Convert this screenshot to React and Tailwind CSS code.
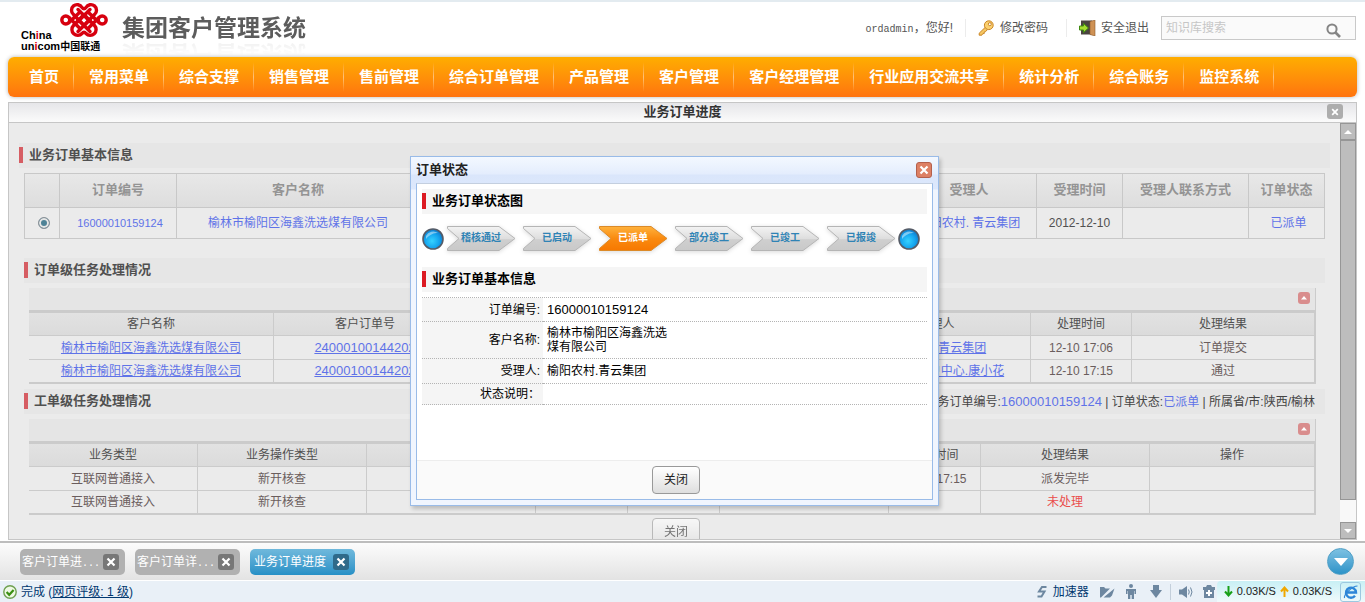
import React from "react";
import { useState } from "react";

const menus = [
  "首页",
  "常用菜单",
  "综合支撑",
  "销售管理",
  "售前管理",
  "综合订单管理",
  "产品管理",
  "客户管理",
  "客户经理管理",
  "行业应用交流共享",
  "统计分析",
  "综合账务",
  "监控系统",
];

const steps = ["稽核通过", "已启动", "已派单", "部分竣工", "已竣工", "已报竣"];

const tabs = [
  { id: 1, name: "客户订单进", more: true },
  { id: 2, name: "客户订单详", more: true },
  { id: 3, name: "业务订单进度", more: false },
];

const taskRows = [
  {
    no: "24000100144202",
    handler: "榆阳农村.青云集团",
    time: "12-10 17:06",
    result: "订单提交",
  },
  {
    no: "24000100144202",
    handler: "榆林联通客户中心.康小花",
    time: "12-10 17:15",
    result: "通过",
  },
];

function Logo() {
  return (
    <div className="relative w-[90px] h-[50px]">
      <svg
        viewBox="0 0 48 38"
        className="absolute right-[2px] top-0 w-[48px] h-[38px]"
        fill="none"
        stroke="#d7000f"
        strokeWidth="3.4"
        strokeLinecap="round"
        strokeLinejoin="round"
      >
        <circle cx="5.8" cy="18" r="4" />
        <circle cx="42.2" cy="18" r="4" />
        <path d="M9 15.5L19.5 26M39 15.5L28.5 26M9 20.5L20 10M39 20.5L28 10" />
        <path d="M24 23.5L13.5 12.5A5.6 5.6 0 1 1 22 5.5Q24 8 26 5.5A5.6 5.6 0 1 1 34.5 12.5L24 23.5" />
        <path d="M24 12.5L13.5 23.5A5.6 5.6 0 1 0 22 31.5Q24 29 26 31.5A5.6 5.6 0 1 0 34.5 23.5L24 12.5" />
        <path d="M18 7.5L30 19.5M30 7.5L18 19.5M18 17.5L30 29.5M30 17.5L18 29.5" />
      </svg>
      <div className="absolute left-px top-[28px] text-[11px] leading-[11px] font-bold text-black whitespace-nowrap">
        <p>
          Ch<span className="text-[#d7000f]">i</span>na
        </p>
        <p>
          un<span className="text-[#d7000f]">i</span>com
          <span className="text-[10px]">中国联通</span>
        </p>
      </div>
    </div>
  );
}

function KeyIcon() {
  return (
    <svg viewBox="0 0 16 16" className="w-4 h-4">
      <path
        d="M7.4 7.2L1.2 13.2v2h2.6l1-1.6h1.4v-1.6l1.3-.3 1.8-1.9"
        fill="#f6c761"
        stroke="#c98425"
      />
      <circle cx="10.8" cy="5.2" r="4.4" fill="#fbd06e" stroke="#c98425" />
      <circle cx="11.8" cy="4.2" r="1.5" fill="#fff" stroke="#c98425" />
    </svg>
  );
}

function DoorIcon() {
  return (
    <svg viewBox="0 0 17 16" className="w-[17px] h-4">
      <rect x="2" y="0.5" width="11" height="14" fill="#4a4440" />
      <path d="M11 1.5L16 0v16l-5-1.5z" fill="#cf9255" stroke="#8d5a2b" strokeWidth=".6" />
      <path
        d="M0.5 6h4V3.4L9.5 8l-5 4.6V10h-4z"
        fill="#a5dd2f"
        stroke="#3f8a10"
      />
    </svg>
  );
}

function SmallX({ size }) {
  return (
    <svg viewBox="0 0 10 10" className={size}>
      <path d="M1.5 1.5l7 7M8.5 1.5l-7 7" stroke="#fff" strokeWidth="2.2" />
    </svg>
  );
}

function Ball() {
  return (
    <svg viewBox="0 0 22 22" className="w-[22px] h-[22px] shrink-0">
      <defs>
        <radialGradient id="ball" cx="45%" cy="60%" r="60%">
          <stop offset="0" stopColor="#35d2ff" />
          <stop offset=".6" stopColor="#14a4ee" />
          <stop offset="1" stopColor="#0f78c8" />
        </radialGradient>
      </defs>
      <circle cx="11" cy="11" r="10" fill="url(#ball)" stroke="#555b66" strokeWidth="1.6" />
      <path d="M4 8a8 8 0 0 1 12-3c-4 0-8 1-12 6z" fill="#fff" opacity=".45" />
    </svg>
  );
}

function Step({ name, active }) {
  return (
    <li className="relative w-[70px] h-[27px] shrink-0">
      <svg viewBox="0 0 70 27" className="absolute inset-0 w-full h-full drop-shadow-sm">
        <defs>
          <linearGradient id="stepOff" x1="0" y1="0" x2="0" y2="1">
            <stop offset="0" stopColor="#f3f3f3" />
            <stop offset=".5" stopColor="#dedede" />
            <stop offset=".55" stopColor="#cfcfcf" />
            <stop offset="1" stopColor="#c9c9c9" />
          </linearGradient>
          <linearGradient id="stepOn" x1="0" y1="0" x2="0" y2="1">
            <stop offset="0" stopColor="#ffb23c" />
            <stop offset=".5" stopColor="#f98a10" />
            <stop offset="1" stopColor="#f77800" />
          </linearGradient>
        </defs>
        <path
          d="M1.5 1.5H53L69 13.5L53 25.5H1.5V23.5L13 13.5L1.5 3.5z"
          fill={active ? "url(#stepOn)" : "url(#stepOff)"}
          stroke={active ? "#dc8a28" : "#b5b5b5"}
          strokeLinejoin="round"
        />
      </svg>
      <span
        className={
          active
            ? "relative block text-center text-[10px] leading-[25px] font-bold text-white"
            : "relative block text-center text-[10px] leading-[25px] font-bold text-[#2f83b5]"
        }
      >
        {name}
      </span>
    </li>
  );
}

function SectionTitle({ title, children }) {
  return (
    <div className="flex items-center justify-between h-[25px] bg-[#e6e6e6] pr-[10px] pb-[2px]">
      <h2 className="flex items-center text-[13px] font-bold text-[#505050]">
        <span className="w-1 h-4 bg-[#d65d63] mr-[6px]"></span>
        {title}
      </h2>
      {children}
    </div>
  );
}

function DialogTitle({ title }) {
  return (
    <h3 className="flex items-center h-[25px] pb-[2px] bg-[#f5f5f5] text-[13px] font-bold text-black">
      <span className="w-1 h-4 bg-[#dc1a22] mr-[6px]"></span>
      {title}
    </h3>
  );
}

function Toolbar() {
  return (
    <div className="flex items-center justify-end h-[22px] mt-[5px] pr-[5px] pb-[2px] bg-[#e5e5e5] border-r border-[#cbcbcb]">
      <button aria-label="收起" className="flex items-center justify-center w-3 h-3 rounded-[3px] bg-[#d98d8d]">
        <svg viewBox="0 0 8 8" className="w-2 h-2">
          <path d="M4 2l3 3.5H1z" fill="#fff" />
        </svg>
      </button>
    </div>
  );
}

function Th({ children }) {
  return (
    <th className="h-[23px] p-0 font-normal text-[#505050] bg-linear-to-b from-[#e2e2e2] to-[#dbdbdb] border-r border-b border-[#cbcbcb] last:border-r-2">
      {children}
    </th>
  );
}

function Td({ children }) {
  return (
    <td className="h-[24px] p-0 text-center border-r border-b border-[#cbcbcb] last:border-r-2 group-last:border-b-2">
      {children}
    </td>
  );
}

function BasicTable() {
  const th =
    "h-[34px] p-0 pb-[2px] border border-[#c8c8c8] text-[13px] font-bold text-[#949494]";
  const td = "h-[31px] p-0 border border-[#c8c8c8] text-center";
  return (
    <table className="w-full table-fixed border-collapse text-[12px] text-[#505050]">
      <colgroup>
        <col className="w-[35px]" />
        <col className="w-[117px]" />
        <col className="w-[243px]" />
        <col />
        <col className="w-[135px]" />
        <col className="w-[86px]" />
        <col className="w-[126px]" />
        <col className="w-[76px]" />
      </colgroup>
      <thead>
        <tr className="bg-linear-to-b from-[#e8e8e8] to-[#dddddd]">
          <th className={th}></th>
          <th className={th}>订单编号</th>
          <th className={th}>客户名称</th>
          <th className={th}></th>
          <th className={th}>受理人</th>
          <th className={th}>受理时间</th>
          <th className={th}>受理人联系方式</th>
          <th className={th}>订单状态</th>
        </tr>
      </thead>
      <tbody>
        <tr>
          <td className={td + " pl-1"}>
            <input
              type="radio"
              name="order"
              aria-label="16000010159124"
              defaultChecked
              className="appearance-none block mx-auto w-3 h-3 rounded-full border border-[#8c9298] bg-[#4d8296] shadow-[inset_0_0_0_2px_#e6e6e6]"
            />
          </td>
          <td className={td}>
            <a href="#" className="pl-1 text-[11px] text-[#5f73e8]">
              16000010159124
            </a>
          </td>
          <td className={td}>
            <a href="#" className="text-[#5f73e8]">
              榆林市榆阳区海鑫洗选煤有限公司
            </a>
          </td>
          <td className={td}></td>
          <td className={td}>
            <a href="#" className="text-[#5f73e8]">
              榆阳农村. 青云集团
            </a>
          </td>
          <td className={td}>2012-12-10</td>
          <td className={td}></td>
          <td className={td}>
            <a href="#" className="pl-1 text-[#5f73e8]">
              已派单
            </a>
          </td>
        </tr>
      </tbody>
    </table>
  );
}

function TaskTable() {
  return (
    <table className="w-full table-fixed border-separate border-spacing-0 border-t-3 border-[#cbcbcb] text-[12px] text-[#6a5d5d]">
      <colgroup>
        <col className="w-[245px]" />
        <col className="w-[183px]" />
        <col />
        <col className="w-[188px]" />
        <col className="w-[101px]" />
        <col className="w-[184px]" />
      </colgroup>
      <thead>
        <tr>
          <Th>客户名称</Th>
          <Th>客户订单号</Th>
          <Th></Th>
          <Th>处理人</Th>
          <Th>处理时间</Th>
          <Th>处理结果</Th>
        </tr>
      </thead>
      <tbody>
        {taskRows.map((row) => (
          <tr key={row.time} className="group">
            <Td>
              <a href="#" className="text-[#5f73e8] underline">
                榆林市榆阳区海鑫洗选煤有限公司
              </a>
            </Td>
            <Td>
              <a href="#" className="text-[13px] text-[#5f73e8] underline">
                {row.no}
              </a>
            </Td>
            <Td></Td>
            <Td>
              <a href="#" className="text-[#5f73e8] underline">
                {row.handler}
              </a>
            </Td>
            <Td>{row.time}</Td>
            <Td>{row.result}</Td>
          </tr>
        ))}
      </tbody>
    </table>
  );
}

function WorkTable() {
  return (
    <table className="w-full table-fixed border-separate border-spacing-0 border-t-3 border-[#cbcbcb] text-[12px] text-[#6a5d5d]">
      <colgroup>
        <col className="w-[169px]" />
        <col className="w-[169px]" />
        <col className="w-[169px]" />
        <col className="w-[92px]" />
        <col className="w-[92px]" />
        <col />
        <col className="w-[92px]" />
        <col className="w-[169px]" />
        <col className="w-[166px]" />
      </colgroup>
      <thead>
        <tr>
          <Th>业务类型</Th>
          <Th>业务操作类型</Th>
          <Th></Th>
          <Th></Th>
          <Th></Th>
          <Th></Th>
          <Th>处理时间</Th>
          <Th>处理结果</Th>
          <Th>操作</Th>
        </tr>
      </thead>
      <tbody>
        <tr className="group">
          <Td>互联网普通接入</Td>
          <Td>新开核查</Td>
          <Td></Td>
          <Td></Td>
          <Td></Td>
          <Td></Td>
          <Td>12-10 17:15</Td>
          <Td>派发完毕</Td>
          <Td></Td>
        </tr>
        <tr className="group">
          <Td>互联网普通接入</Td>
          <Td>新开核查</Td>
          <Td></Td>
          <Td></Td>
          <Td></Td>
          <Td></Td>
          <Td></Td>
          <Td>
            <span className="text-[#ea4c4c]">未处理</span>
          </Td>
          <Td></Td>
        </tr>
      </tbody>
    </table>
  );
}

function StatusDialog({ onClose }) {
  const label = "w-[121px] p-0 pr-[3px] bg-[#f5f5f5] text-right font-normal border-b border-dotted border-[#b4b4b4]";
  const value = "p-0 pl-1 border-b border-dotted border-[#b4b4b4]";
  return (
    <div
      role="dialog"
      aria-label="订单状态"
      className="flex flex-col w-[529px] h-[350px] px-[5px] pb-[5px] border border-[#99bbe8] bg-[#f0f5fe] bg-[linear-gradient(#f3f8ff_0px,#e4edfd_17px,#dae6fb_18px,#dde8fc_32px,#f0f5fe_33px)] shadow-[2px_3px_4px_rgba(0,0,0,0.2)] text-[12px] text-black"
    >
      <div className="flex items-center justify-between h-[26px] pr-px">
        <h2 className="text-[13px] font-bold text-[#222]">订单状态</h2>
        <button
          aria-label="关闭窗口"
          onClick={onClose}
          className="flex items-center justify-center w-4 h-4 rounded-[3px] border border-[#b4604c] bg-[#dd8064]"
        >
          <SmallX size="w-[10px] h-[10px]" />
        </button>
      </div>
      <div className="flex-1 flex flex-col bg-white border border-[#99bbe8] border-t-[#c4cfdf]">
        <div className="flex-1 px-[5px] pt-[5px]">
          <DialogTitle title="业务订单状态图" />
          <div className="flex items-center h-[53px] pb-1">
            <Ball />
            <ol className="flex gap-[6px] mx-[2px]">
              {steps.map((s) => (
                <Step key={s} name={s} active={s === "已派单"} />
              ))}
            </ol>
            <Ball />
          </div>
          <DialogTitle title="业务订单基本信息" />
          <table className="w-full mt-[5px] border-separate border-spacing-0 border-t border-dotted border-[#b4b4b4]">
            <tbody>
              <tr>
                <th className={label}>订单编号:</th>
                <td className={value + " h-[24px] text-[13px]"}>16000010159124</td>
              </tr>
              <tr>
                <th className={label}>客户名称:</th>
                <td className={value + " h-[37px]"}>
                  <p className="w-[125px] leading-[14px]">
                    榆林市榆阳区海鑫洗选煤有限公司
                  </p>
                </td>
              </tr>
              <tr>
                <th className={label}>受理人:</th>
                <td className={value + " h-[25px]"}>榆阳农村.青云集团</td>
              </tr>
              <tr>
                <th className={label}>状态说明：</th>
                <td className={value + " h-[21px]"}></td>
              </tr>
            </tbody>
          </table>
        </div>
        <div className="flex justify-center h-[39px] pt-[5px] pl-[3px] border-t border-[#ededed] bg-[#fafafa]">
          <CloseButton onClick={onClose} />
        </div>
      </div>
    </div>
  );
}

function CloseButton({ onClick }) {
  return (
    <button
      onClick={onClick}
      className="w-12 h-7 rounded border border-[#999] bg-linear-to-b from-white to-[#dedede] text-[12px] text-[#222]"
    >
      关闭
    </button>
  );
}

function ScrollBar() {
  return (
    <div className="flex flex-col w-4 shrink-0 bg-[#f8f8f8]">
      <button aria-label="向上" className="flex items-center justify-center h-[17px] border border-[#969696] bg-[#bdbdbd]">
        <svg viewBox="0 0 8 8" className="w-2 h-2">
          <path d="M4 2l4 4H0z" fill="#fff" />
        </svg>
      </button>
      <div className="flex-1 border border-[#969696] bg-[#bdbdbd]"></div>
      <div className="h-[22px]"></div>
      <button aria-label="向下" className="flex items-center justify-center h-[17px] border border-[#969696] bg-[#bdbdbd]">
        <svg viewBox="0 0 8 8" className="w-2 h-2">
          <path d="M0 2h8L4 6z" fill="#fff" />
        </svg>
      </button>
    </div>
  );
}

function Header() {
  return (
    <header className="flex justify-between h-[57px] shrink-0 pl-5 pr-[9px] border-t-2 border-[#e3ebf0]">
      <div className="flex gap-3">
        <Logo />
        <h1 className="h-[34px] mt-[9px] text-[23px] leading-[34px] font-bold text-[#5c5c5c] whitespace-nowrap [-webkit-box-reflect:below_-8px_linear-gradient(transparent_45%,rgba(0,0,0,0.12))]">
          集团客户管理系统
        </h1>
      </div>
      <div className="flex items-center h-[52px] text-[12px] text-[#555] whitespace-nowrap">
        <span>
          <span className="font-['Liberation_Mono',monospace] text-[10px]">
            ordadmin
          </span>
          ，您好!
        </span>
        <span className="w-px h-[18px] ml-3 mr-3 bg-[#ececec]"></span>
        <a href="#" className="flex items-center gap-[6px]">
          <KeyIcon />
          修改密码
        </a>
        <span className="w-px h-[18px] ml-[18px] mr-3 bg-[#ececec]"></span>
        <a href="#" className="flex items-center gap-[5px]">
          <DoorIcon />
          安全退出
        </a>
        <div className="flex items-center w-[195px] h-6 ml-3 pr-[14px] border border-[#c9c9c9] bg-[#fafafa]">
          <input
            type="text"
            aria-label="知识库搜索"
            placeholder="知识库搜索"
            className="flex-1 min-w-0 pl-1 text-[12px] placeholder:text-[#c6c6c6] outline-none"
          />
          <button aria-label="搜索">
            <svg viewBox="0 0 15 15" className="w-[15px] h-[15px] mt-1" fill="none" stroke="#858585">
              <circle cx="6" cy="6" r="4.6" strokeWidth="2" />
              <path d="M9.5 9.5l4.5 4.5" strokeWidth="2.6" />
            </svg>
          </button>
        </div>
      </div>
    </header>
  );
}

function Dock() {
  const [active, setActive] = useState(3);
  return (
    <div className="flex items-center justify-between h-[39px] shrink-0 pl-5 pr-[11px] border-t-2 border-[#bdbdbd] bg-linear-to-b from-[#fcfcfc] to-[#e3e3e3]">
      <div className="flex gap-[10px]">
        {tabs.map((tab) => (
          <div
            key={tab.id}
            className={
              active === tab.id
                ? "flex items-center justify-between w-[105px] h-[26px] pl-1 pr-[6px] rounded-[5px] bg-linear-to-b from-[#6fb9dc] to-[#2590c6] text-white"
                : "flex items-center justify-between w-[105px] h-[26px] pl-[2px] pr-[6px] rounded-[5px] bg-[#b1b1b1] text-white"
            }
          >
            <button className="text-[12px] whitespace-nowrap" onClick={() => setActive(tab.id)}>
              {tab.name}
              {tab.more && (
                <span className="font-['Liberation_Mono',monospace] text-[10px]">
                  ...
                </span>
              )}
            </button>
            <button
              aria-label="关闭标签"
              className={
                active === tab.id
                  ? "flex items-center justify-center w-4 h-4 rounded-[3px] bg-[#2f6a8a]"
                  : "flex items-center justify-center w-4 h-4 rounded-[3px] bg-[#777]"
              }
            >
              <SmallX size="w-[10px] h-[10px]" />
            </button>
          </div>
        ))}
      </div>
      <button
        aria-label="展开"
        className="flex items-center justify-center w-[27px] h-[27px] rounded-full border border-[#4f9fc6] bg-linear-to-b from-[#7cc1e2] to-[#2a93c8]"
      >
        <svg viewBox="0 0 14 8" className="w-[14px] h-2">
          <path d="M0 0h14L7 8z" fill="#fff" />
        </svg>
      </button>
    </div>
  );
}

function StatusBar() {
  return (
    <footer className="flex items-center justify-between h-[22px] shrink-0 pl-[3px] bg-[#e9f0f7] border-t border-white text-[12px] text-[#00376f] whitespace-nowrap">
      <div className="flex items-center">
        <svg viewBox="0 0 14 14" className="w-[14px] h-[14px] mr-1" fill="none">
          <circle cx="7" cy="7" r="6.2" fill="#eef8e4" stroke="#6fa050" strokeWidth="1.4" />
          <path d="M3.6 7l2.6 2.8L10.6 5" stroke="#3a8f12" strokeWidth="2.2" />
        </svg>
        <span>
          完成 (
          <a href="#" className="underline">
            网页评级: 1 级
          </a>
          )
        </span>
      </div>
      <div className="flex items-center h-full text-[#6d87a0]">
        <svg viewBox="0 0 10 12" className="w-[10px] h-3" fill="none" stroke="currentColor" strokeWidth="2">
          <path d="M9.5 1H5L2 5.5H7.5L4.5 10.5H0.5" />
        </svg>
        <a href="#" className="ml-[6px] text-[#00376f]">
          加速器
        </a>
        <svg viewBox="0 0 15 12" className="w-[15px] h-3 ml-[11px]" fill="currentColor">
          <path d="M0 1h4l1.5 1.5H10L1 11.5H0zM14.5 2.5L12 9.5l-2 2H3.5z" />
        </svg>
        <svg viewBox="0 0 12 15" className="w-3 h-[15px] ml-[10px]" fill="currentColor">
          <circle cx="6" cy="2" r="2" />
          <path d="M1 5h10v5H9.5V7H9v8H6.7v-4H5.3v4H3V7h-.5v3H1z" />
        </svg>
        <svg viewBox="0 0 12 13" className="w-3 h-[13px] ml-[13px]" fill="currentColor">
          <path d="M3 0h6v5h3l-6 8-6-8h3z" />
        </svg>
        <span className="w-px h-4 ml-2 mr-2 bg-[#c3cfdb]"></span>
        <svg viewBox="0 0 14 12" className="w-[14px] h-3" fill="currentColor">
          <path d="M0 3.5h3L8 0v12L3 8.5H0z" />
          <path d="M9.5 3.5Q11 6 9.5 8.5M11.5 1.5Q14.5 6 11.5 10.5" fill="none" stroke="currentColor" />
        </svg>
        <svg viewBox="0 0 12 13" className="w-3 h-[13px] ml-[10px] mr-[2px]" fill="currentColor">
          <path d="M3 2l1-2h4l1 2h3v3h-1v8H1V5H0V2z" />
          <path d="M6 5v6M3 8h6" stroke="#fff" strokeWidth="2" />
        </svg>
        <div className="flex items-center h-full pl-[7px] pr-1 rounded-tl bg-linear-to-b from-[#c8f0f5] to-[#f0fafc] text-[#222]">
          <svg viewBox="0 0 9 11" className="w-[9px] h-[11px] mr-1" fill="none" stroke="#18a018" strokeWidth="2">
            <path d="M4.5 0v9M1 5.5l3.5 4L8 5.5" />
          </svg>
          <span className="text-[11px]">0.03K/S</span>
          <svg viewBox="0 0 9 11" className="w-[9px] h-[11px] ml-1 mr-1" fill="none" stroke="#f0a800" strokeWidth="2">
            <path d="M4.5 11V2M1 5.5l3.5-4L8 5.5" />
          </svg>
          <span className="text-[11px]">0.03K/S</span>
          <button aria-label="浏览器" className="flex items-center justify-center w-[21px] h-5 ml-2 rounded-[3px] border border-[#9cc8e0]">
            <svg viewBox="0 0 16 16" className="w-4 h-4" fill="none" stroke="#2d86d8">
              <path d="M3.5 8.5H13a5 5 0 1 0-1 3.2" strokeWidth="2.4" />
              <path d="M1.5 14C.5 11 9 2 14.5 2" strokeWidth="1.2" />
            </svg>
          </button>
        </div>
      </div>
    </footer>
  );
}

export default function App() {
  const [open, setOpen] = useState(true);

  return (
    <div className="flex flex-col h-screen overflow-hidden bg-white font-['Liberation_Sans','Noto_Sans_CJK_SC',sans-serif]">
      <Header />
      <nav className="flex h-10 shrink-0 mx-2 pl-[6px] rounded-md bg-linear-to-b from-[#ffad00] to-[#ff730e] shadow-[0_0_4px_rgba(0,0,0,0.3)] text-[15px] font-bold text-white">
        {menus.map((m) => (
          <a
            key={m}
            href="#"
            className="flex items-center pl-[15px] pr-[14px] border-r [border-image:linear-gradient(transparent_15%,#ffc27a_50%,transparent_85%)_1] whitespace-nowrap"
          >
            {m}
          </a>
        ))}
      </nav>

      <main className="flex-1 min-h-0 flex flex-col mt-[5px] mx-2 mb-px border border-[#c6c6c6] bg-[#ebebeb]">
        <div className="flex items-center h-5 shrink-0 pr-[13px] pb-[2px] border-b border-[#c6c6c6] bg-linear-to-b from-[#e6e6e9] to-[#fbfbfb]">
          <h2 className="flex-1 pl-[29px] text-center text-[13px] font-bold text-[#333]">
            业务订单进度
          </h2>
          <button
            aria-label="关闭页面"
            className="flex items-center justify-center w-4 h-[15px] rounded-[3px] bg-[#adadad]"
          >
            <SmallX size="w-2 h-2" />
          </button>
        </div>
        <div className="flex-1 min-h-0 flex">
          <div className="relative flex-1 min-w-0 overflow-hidden px-[10px] pt-5">
            <SectionTitle title="业务订单基本信息" />
            <div className="px-[5px] pt-[5px]">
              <BasicTable />
              <div className="h-[19px]"></div>
              <SectionTitle title="订单级任务处理情况" />
              <div className="pl-[5px] pr-[9px] mb-[5px]">
                <Toolbar />
                <TaskTable />
              </div>
              <SectionTitle title="工单级任务处理情况">
                <p className="pt-[2px] text-[12px] text-[#444] whitespace-nowrap">
                  业务订单编号:
                  <a href="#" className="text-[13px] text-[#5f73e8]">
                    16000010159124
                  </a>
                  {" | "}订单状态:
                  <a href="#" className="text-[#5f73e8]">
                    已派单
                  </a>
                  {" | "}所属省/市:陕西/榆林
                </p>
              </SectionTitle>
              <div className="pl-[5px] pr-[9px]">
                <Toolbar />
                <WorkTable />
              </div>
              <div className="flex justify-center pt-[3px] pl-[3px] opacity-60">
                <CloseButton onClick={() => setOpen(false)} />
              </div>
            </div>

            {open && (
              <div className="absolute inset-x-0 top-[33px] flex justify-center">
                <StatusDialog onClose={() => setOpen(false)} />
              </div>
            )}
          </div>
          <ScrollBar />
        </div>
      </main>

      <Dock />
      <StatusBar />
    </div>
  );
}
